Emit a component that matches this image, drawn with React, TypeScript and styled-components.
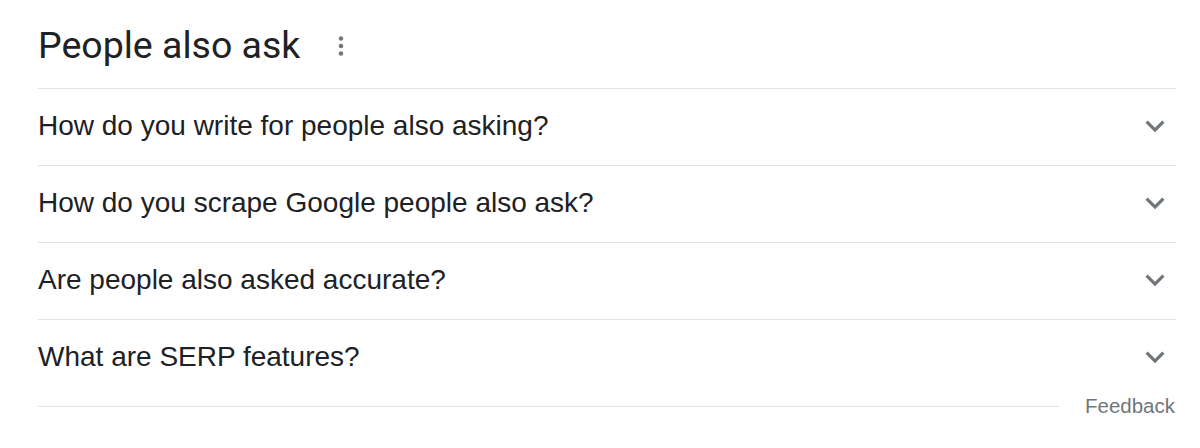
import React from "react";
import styled, { createGlobalStyle } from "styled-components";

const Global = createGlobalStyle`
  html, body { margin: 0; padding: 0; background: #fff; }
  body { font-family: "Liberation Sans", Arial, sans-serif; color: #202124; }
`;

const Wrapper = styled.div`
  width: 1138px;
  margin-left: 38px;
`;

const Header = styled.div`
  height: 88px;
  display: flex;
  align-items: center;
  box-sizing: border-box;
  padding-top: 4px;
`;

const Title = styled.h2`
  margin: 0;
  font-family: Roboto, "Liberation Sans", sans-serif;
  font-weight: 400;
  font-size: 37.5px;
  line-height: 1;
  color: #202124;
`;

const MenuButton = styled.div`
  width: 30px;
  height: 30px;
  margin-left: 26px;
  display: flex;
  align-items: center;
  justify-content: center;
  color: #70757a;
`;

const Row = styled.div`
  height: 77px;
  box-sizing: border-box;
  border-top: 1px solid #e3e3e3;
  display: flex;
  align-items: center;
  justify-content: space-between;
  padding-right: 2px;
  padding-bottom: 2px;
`;

const Question = styled.span`
  font-size: 28px;
  line-height: 1;
  color: #202124;
`;

const Chevron = styled.svg`
  width: 38px;
  height: 38px;
  fill: #70757a;
`;

const Footer = styled.div`
  display: flex;
  align-items: center;
  height: 20px;
  gap: 26px;
`;

const FooterLine = styled.div`
  flex: 1;
  height: 1px;
  background: #e3e3e3;
`;

const FeedbackLink = styled.span`
  font-size: 20.5px;
  color: #70757a;
  line-height: 1;
  padding-right: 1px;
`;

const questions = [
  "How do you write for people also asking?",
  "How do you scrape Google people also ask?",
  "Are people also asked accurate?",
  "What are SERP features?",
];

export default function App() {
  return (
    <>
      <Global />
      <Wrapper>
        <Header>
          <Title>People also ask</Title>
          <MenuButton>
            <svg width="30" height="30" viewBox="0 0 24 24" fill="currentColor">
              <circle cx="12" cy="6" r="1.8" />
              <circle cx="12" cy="12" r="1.8" />
              <circle cx="12" cy="18" r="1.8" />
            </svg>
          </MenuButton>
        </Header>
        {questions.map((q) => (
          <Row key={q}>
            <Question>{q}</Question>
            <Chevron viewBox="0 0 24 24">
              <path d="M16.59 8.59L12 13.17 7.41 8.59 6 10l6 6 6-6z" />
            </Chevron>
          </Row>
        ))}
        <Footer>
          <FooterLine />
          <FeedbackLink>Feedback</FeedbackLink>
        </Footer>
      </Wrapper>
    </>
  );
}
